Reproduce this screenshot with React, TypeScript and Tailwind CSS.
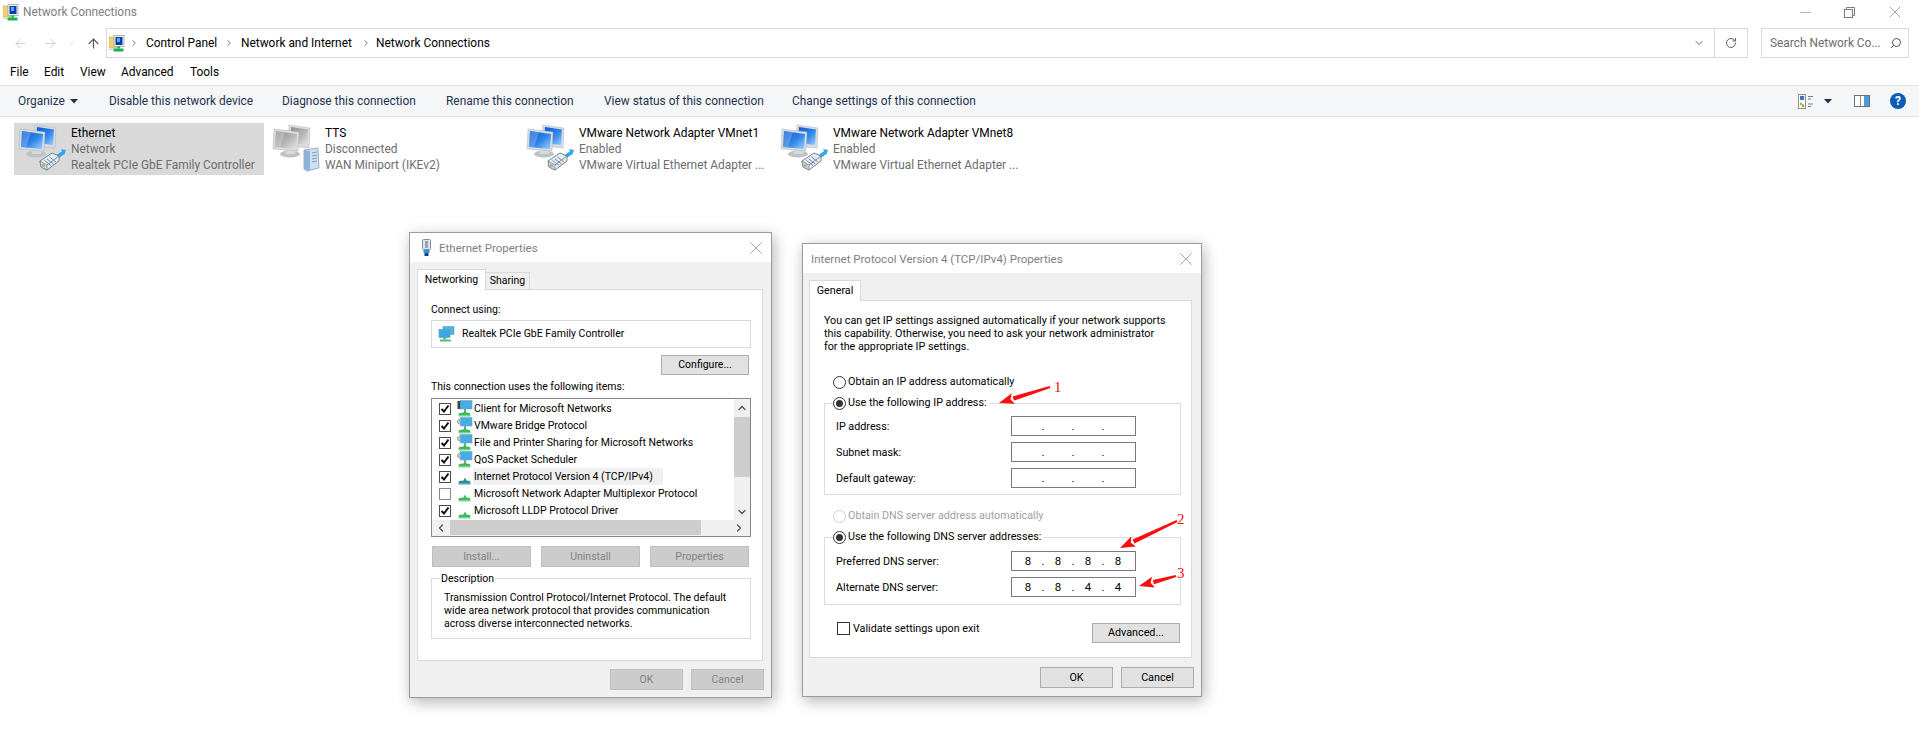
import React from "react";
import { ArrowLeft, ArrowRight, ArrowUp, ChevronDown, ChevronRight, ChevronUp, ChevronLeft, Minus, X, RotateCw, Search } from "lucide-react";

function NetIcon({ id, gray, kind }: { id: string; gray?: boolean; kind: "plug" | "server" }) {
  const a = gray ? "#8f8f8f" : "#0b55d0";
  const b = gray ? "#e6e6e6" : "#9fd0ff";
  const frame = gray ? "#dcdcdc" : "#d5dce4";
  return (
    <svg width="48" height="48" viewBox="0 0 48 48" className="shrink-0">
      <defs>
        <linearGradient id={id + "s"} x1="0" y1="0" x2="1" y2="1">
          <stop offset="0" stopColor={a} />
          <stop offset="0.55" stopColor={gray ? "#b5b5b5" : "#2f86ea"} />
          <stop offset="1" stopColor={b} />
        </linearGradient>
      </defs>
      <polygon points="17,1 38,4 37,24 16,22" fill={frame} stroke="#aeb4ba" strokeWidth="0.5" />
      <polygon points="19,3 36,5.5 35,21 18,19" fill={`url(#${id}s)`} />
      <ellipse cx="18" cy="30" rx="10" ry="3.6" fill="#bfc2c4" />
      <polygon points="13,25 24,26 23,30 14,30" fill="#d7d9db" />
      <polygon points="2,5 27,8 26,27 1,25" fill={frame} stroke="#aeb4ba" strokeWidth="0.5" />
      <polygon points="4,7 25,10 24,25 3,23" fill={`url(#${id}s)`} />
      <polygon points="4,7 13,8.2 8,23.4 3,23" fill="#ffffff" opacity="0.22" />
      {kind === "plug" ? (
        <g>
          <path d="M39 33 L46 28" stroke="#2ea7ef" strokeWidth="3.5" />
          <polygon points="43,25 48,26 46,31" fill="#2ea7ef" />
          <polygon points="22,37 34,29 41,32 41,37 29,46 23,43" fill="#e4ebf1" stroke="#66788a" strokeWidth="0.9" />
          <polygon points="22,37 29,41 29,46 23,43" fill="#c9d3dc" stroke="#66788a" strokeWidth="0.6" />
          <path d="M29 41 L41 32 M26.5 36.5 L33 41.5 M29 35 L35.5 40 M31.5 33 L38 38" stroke="#7a8ea1" strokeWidth="1" />
          <rect x="24" y="40.5" width="3" height="2" fill="#c9a23a" />
        </g>
      ) : (
        <g>
          <polygon points="32,26 46,24 47,44 35,47 32,45" fill="#cfe0f0" stroke="#6f93b8" strokeWidth="0.7" />
          <polygon points="32,26 38,27 38,47 32,45" fill="#8fb2d6" />
          <path d="M40 29 L45 28 M40 32 L45 31 M40 35 L45 34 M40 38 L45 37" stroke="#7c9cbd" strokeWidth="1" />
        </g>
      )}
    </svg>
  );
}

function FolderNet() {
  return (
    <svg width="16" height="17" viewBox="0 0 16 17" className="shrink-0">
      <path d="M0 2 H5 L6 3.5 H11 V13 H0 Z" fill="#f2cf6b" stroke="#c9a13f" strokeWidth="0.5" />
      <rect x="5" y="0.5" width="10" height="11" fill="#f1f3f5" stroke="#8d99a6" strokeWidth="0.7" />
      <rect x="6.5" y="2" width="7" height="8" fill="#0b3fa8" />
      <rect x="8" y="3" width="3" height="4" fill="#5fa6f0" />
      <rect x="8.5" y="11.5" width="2.5" height="2" fill="#1bb35a" />
      <rect x="4.5" y="13.5" width="10" height="3" fill="#18b058" />
      <rect x="0" y="14" width="4" height="1" fill="#cfcfcf" />
    </svg>
  );
}

function SmallMonitors() {
  return (
    <svg width="17" height="16" viewBox="0 0 17 16" className="shrink-0">
      <rect x="5" y="0.5" width="11" height="8" fill="#4fb3e6" stroke="#5a9dc0" strokeWidth="0.6" />
      <rect x="1" y="3.5" width="11" height="8" fill="#39a7e0" stroke="#5a9dc0" strokeWidth="0.6" />
      <rect x="5.5" y="11.5" width="2.5" height="2" fill="#3ab56a" />
      <rect x="2" y="13.5" width="11" height="2" fill="#4cc27c" />
    </svg>
  );
}

function ProtoIcon({ type, teal }: { type: "client" | "gear" | "base"; teal?: boolean }) {
  const g = teal ? "#2b8f9c" : "#3cba5c";
  return (
    <svg width="16" height="17" viewBox="0 0 16 17" className="shrink-0">
      {type !== "base" && (
        <>
          {type === "client" ? (
            <rect x="0.5" y="1" width="4.5" height="8" fill="#3d4347" />
          ) : (
            <circle cx="3" cy="4.5" r="2.6" fill="#c3c9cd" stroke="#7f8a92" strokeWidth="1" strokeDasharray="1.4 0.8" />
          )}
          <rect x="3.5" y="0.5" width="11.5" height="8.5" fill="#48ade6" stroke="#6aa8c9" strokeWidth="0.6" />
          <rect x="7" y="9" width="2" height="2.5" fill="#999999" />
        </>
      )}
      <polygon points="8,9.5 9.5,12.5 13,13 13.5,15.5 1.5,15.5 2,13 6.5,12.5" fill={g} />
      <rect x="1.5" y="15" width="12" height="1.5" fill={teal ? "#54a6b2" : "#7ed48f"} />
    </svg>
  );
}

function Check({ on, className }: { on?: boolean; className?: string }) {
  return (
    <span className={"w-[12px] h-[12px] border bg-white shrink-0 flex items-center justify-center " + (on ? "border-[#4d4d4d] " : "border-[#8a8a8a] ") + (className || "")}>
      {on && (
        <svg width="10" height="10" viewBox="0 0 10 10">
          <path d="M1.5 5 L4 7.5 L8.5 1.5" fill="none" stroke="#111111" strokeWidth="2" />
        </svg>
      )}
    </span>
  );
}

function Radio({ on, disabled }: { on?: boolean; disabled?: boolean }) {
  return (
    <span className={"w-[13px] h-[13px] rounded-full border bg-white shrink-0 flex items-center justify-center " + (disabled ? "border-[#cfcfcf]" : "border-[#333333]")}>
      {on && <span className="w-[7px] h-[7px] rounded-full bg-[#333333]" />}
    </span>
  );
}

function Btn({ label, w, disabled }: { label: string; w: string; disabled?: boolean }) {
  return (
    <div className={w + " flex items-center justify-center border shrink-0 " + (disabled ? "bg-[#cccccc] border-[#bfbfbf] text-[#838383]" : "bg-[#e1e1e1] border-[#adadad] text-black")}>{label}</div>
  );
}

function IpBox({ octets }: { octets?: string[] }) {
  const o = octets || ["", "", "", ""];
  return (
    <div className="w-[125px] h-[20px] border border-[#7a7a7a] bg-white flex items-center pl-[6px] text-black shrink-0 text-[11.5px]">
      <span className="w-[20px] text-center">{o[0]}</span>
      <span className="w-[10px] text-center">.</span>
      <span className="w-[20px] text-center">{o[1]}</span>
      <span className="w-[10px] text-center">.</span>
      <span className="w-[20px] text-center">{o[2]}</span>
      <span className="w-[10px] text-center">.</span>
      <span className="w-[20px] text-center">{o[3]}</span>
    </div>
  );
}

function IpRow({ label, octets }: { label: string; octets?: string[] }) {
  return (
    <div className="flex items-center h-[20px] pl-[11px]">
      <span className="w-[175px] shrink-0 pt-[1px]">{label}</span>
      <IpBox octets={octets} />
    </div>
  );
}

function Arrow({ x1, y1, x2, y2 }: { x1: number; y1: number; x2: number; y2: number }) {
  const len = Math.hypot(x2 - x1, y2 - y1);
  const ux = (x2 - x1) / len;
  const uy = (y2 - y1) / len;
  const bx = x2 - ux * 15;
  const by = y2 - uy * 15;
  const nx = -uy;
  const ny = ux;
  return (
    <>
      <polygon points={`${x1 - nx * 1.1},${y1 - ny * 1.1} ${x1 + nx * 1.1},${y1 + ny * 1.1} ${bx + nx * 2.2},${by + ny * 2.2} ${bx - nx * 2.2},${by - ny * 2.2}`} fill="#f80f0f" />
      <polygon points={`${x2},${y2} ${bx + nx * 5.5},${by + ny * 5.5} ${bx + ux * 3},${by + uy * 3} ${bx - nx * 5.5},${by - ny * 5.5}`} fill="#f80f0f" />
    </>
  );
}

function Conn({ name, status, dev, selected, gray, id }: { name: string; status: string; dev: string; selected?: boolean; gray?: boolean; id: string }) {
  return (
    <div className={"w-[250px] h-[52px] flex pl-[4px] pt-[1px] " + (selected ? "bg-[#d9d9d9]" : "")}>
      <NetIcon id={id} gray={gray} kind={gray ? "server" : "plug"} />
      <div className="ml-[5px] flex flex-col leading-[16px] whitespace-nowrap -mt-[1px] pt-[2px]">
        <span className="text-black">{name}</span>
        <span className="text-[#6d6d6d]">{status}</span>
        <span className="text-[#6d6d6d]">{dev}</span>
      </div>
    </div>
  );
}

const rows: { t: string; on: boolean; icon: "client" | "gear" | "base"; sel?: boolean }[] = [
  { t: "Client for Microsoft Networks", on: true, icon: "client" },
  { t: "VMware Bridge Protocol", on: true, icon: "gear" },
  { t: "File and Printer Sharing for Microsoft Networks", on: true, icon: "gear" },
  { t: "QoS Packet Scheduler", on: true, icon: "gear" },
  { t: "Internet Protocol Version 4 (TCP/IPv4)", on: true, icon: "base", sel: true },
  { t: "Microsoft Network Adapter Multiplexor Protocol", on: false, icon: "base" },
  { t: "Microsoft LLDP Protocol Driver", on: true, icon: "base" },
];

function EthernetDialog() {
  return (
    <div className="absolute left-[409px] top-[232px] w-[363px] h-[466px] border border-[#9b9b9b] bg-[#f0f0f0] flex flex-col text-[10.5px] shadow-[2px_4px_14px_rgba(0,0,0,0.3)]">
      <div className="h-[29px] bg-white flex items-center pl-[11px] pr-[4px] shrink-0 text-[11.5px]">
        <svg width="11" height="17" viewBox="0 0 11 17" className="shrink-0">
          <rect x="1.5" y="0.5" width="8" height="10" rx="1" fill="#dfe6ea" stroke="#7f8f9a" />
          <rect x="4" y="2" width="3" height="7" fill="#93a6b3" />
          <rect x="2.5" y="11" width="6" height="3" fill="#2c93d6" />
          <rect x="3.5" y="14" width="4" height="3" fill="#123e8c" />
        </svg>
        <span className="ml-[7px] text-[#808080]">Ethernet Properties</span>
        <X className="ml-auto text-[#7a7a7a]" size={22} strokeWidth={0.7} />
      </div>
      <div className="flex-1 flex flex-col pl-[7px] pr-[7px] pt-[7px]">
        <div className="flex items-end h-[21px] relative z-10 shrink-0">
          <div className="w-[69px] h-[21px] bg-white border border-b-0 border-[#d9d9d9] flex items-center justify-center">Networking</div>
          <div className="w-[44px] h-[18px] bg-[#f0f0f0] border border-l-0 border-[#d9d9d9] flex items-center justify-center">Sharing</div>
        </div>
        <div className="w-[346px] h-[372px] -mt-[1px] bg-white border border-[#d9d9d9] pl-[13px] flex flex-col shrink-0">
          <div className="h-[16px] mt-[12px] flex items-center">Connect using:</div>
          <div className="w-[320px] h-[28px] mt-[2px] border border-[#d9d9d9] flex items-center pl-[6px]">
            <SmallMonitors />
            <span className="ml-[7px]">Realtek PCIe GbE Family Controller</span>
          </div>
          <div className="mt-[7px] ml-[230px] h-[20px] flex"><Btn label="Configure..." w="w-[88px]" /></div>
          <div className="h-[16px] mt-[4px] flex items-center">This connection uses the following items:</div>
          <div className="w-[320px] h-[139px] mt-[3px] border border-[#828790] flex flex-col shrink-0 bg-[#f0f0f0]">
            <div className="flex h-[121px] shrink-0">
              <div className="w-[302px] bg-white pt-[1px] overflow-hidden">
                {rows.map((r) => (
                  <div key={r.t} className="h-[17px] flex items-center pl-[7px]">
                    <Check on={r.on} />
                    <span className="ml-[6px] flex"><ProtoIcon type={r.icon} teal={r.sel} /></span>
                    <span className={"h-[17px] flex items-center whitespace-nowrap px-[1px] pt-[1px] " + (r.sel ? "bg-[#f0f0f0] w-[190px]" : "")}>{r.t}</span>
                  </div>
                ))}
              </div>
              <div className="w-[16px] flex flex-col items-center text-[#505050]">
                <div className="h-[18px] flex items-center"><ChevronUp size={12} strokeWidth={2.5} /></div>
                <div className="w-full h-[60px] bg-[#cdcdcd]" />
                <div className="flex-1" />
                <div className="h-[16px] flex items-center"><ChevronDown size={12} strokeWidth={2.5} /></div>
              </div>
            </div>
            <div className="flex h-[15px] items-center text-[#505050]">
              <div className="w-[18px] flex justify-center"><ChevronLeft size={12} strokeWidth={2.5} /></div>
              <div className="w-[251px] h-full bg-[#cdcdcd]" />
              <div className="w-[32px]" />
              <div className="w-[17px] flex justify-start"><ChevronRight size={12} strokeWidth={2.5} /></div>
            </div>
          </div>
          <div className="flex h-[21px] mt-[9px] ml-[1px] gap-[10px]">
            <Btn label="Install..." w="w-[99px]" disabled />
            <Btn label="Uninstall" w="w-[99px]" disabled />
            <Btn label="Properties" w="w-[99px]" disabled />
          </div>
          <div className="relative w-[320px] h-[61px] mt-[11px] border border-[#dcdcdc] pl-[12px] pt-[12px] leading-[13px] whitespace-nowrap">
            <span className="absolute -top-[8px] left-[8px] bg-white px-[1px] leading-[16px]">Description</span>
            Transmission Control Protocol/Internet Protocol. The default<br />
            wide area network protocol that provides communication<br />
            across diverse interconnected networks.
          </div>
        </div>
        <div className="flex justify-end gap-[8px] h-[21px] mt-[8px] shrink-0">
          <Btn label="OK" w="w-[73px]" disabled />
          <Btn label="Cancel" w="w-[73px]" disabled />
        </div>
      </div>
    </div>
  );
}

function Ipv4Dialog() {
  return (
    <div className="absolute left-[802px] top-[243px] w-[400px] h-[454px] border border-[#9b9b9b] bg-[#f0f0f0] flex flex-col text-[10.75px] shadow-[2px_4px_14px_rgba(0,0,0,0.3)]">
      <div className="h-[29px] bg-white flex items-center pl-[8px] pr-[4px] shrink-0 text-[11.5px]">
        <span className="text-[#808080]">Internet Protocol Version 4 (TCP/IPv4) Properties</span>
        <X className="ml-auto text-[#7a7a7a]" size={22} strokeWidth={0.7} />
      </div>
      <div className="flex-1 flex flex-col pl-[6px] pr-[7px] pt-[7px]">
        <div className="flex items-end h-[21px] relative z-10 shrink-0">
          <div className="w-[52px] h-[21px] bg-white border border-b-0 border-[#d9d9d9] flex items-center justify-center">General</div>
        </div>
        <div className="w-[383px] h-[358px] -mt-[1px] bg-white border border-[#d9d9d9] flex flex-col shrink-0">
          <div className="mt-[13px] ml-[14px] leading-[13px] whitespace-nowrap">
            You can get IP settings assigned automatically if your network supports<br />
            this capability. Otherwise, you need to ask your network administrator<br />
            for the appropriate IP settings.
          </div>
          <div className="mt-[21px] ml-[23px] h-[16px] flex items-center gap-[2px]"><Radio /><span>Obtain an IP address automatically</span></div>
          <div className="relative ml-[14px] w-[357px] h-[92px] mt-[13px] border border-[#dcdcdc] pt-[12px] flex flex-col gap-[6px]">
            <div className="absolute -top-[9px] left-[8px] bg-white pr-[3px] h-[16px] flex items-center gap-[2px]"><Radio on /><span>Use the following IP address:</span></div>
            <IpRow label="IP address:" />
            <IpRow label="Subnet mask:" />
            <IpRow label="Default gateway:" />
          </div>
          <div className="mt-[13px] ml-[23px] h-[16px] flex items-center gap-[2px] text-[#a0a0a0]"><Radio disabled /><span>Obtain DNS server address automatically</span></div>
          <div className="relative ml-[14px] w-[357px] h-[68px] mt-[13px] border border-[#dcdcdc] pt-[13px] flex flex-col gap-[6px]">
            <div className="absolute -top-[9px] left-[8px] bg-white pr-[3px] h-[16px] flex items-center gap-[2px]"><Radio on /><span>Use the following DNS server addresses:</span></div>
            <IpRow label="Preferred DNS server:" octets={["8", "8", "8", "8"]} />
            <IpRow label="Alternate DNS server:" octets={["8", "8", "4", "4"]} />
          </div>
          <div className="mt-[17px] ml-[27px] mr-[11px] flex items-start">
            <span className="w-[13px] h-[13px] border border-[#333333] bg-white shrink-0" />
            <span className="ml-[3px] leading-[14px]">Validate settings upon exit</span>
            <div className="ml-auto h-[20px] mt-[1px] flex"><Btn label="Advanced..." w="w-[88px]" /></div>
          </div>
        </div>
        <div className="flex justify-end gap-[8px] h-[21px] mt-[9px] shrink-0">
          <Btn label="OK" w="w-[73px]" />
          <Btn label="Cancel" w="w-[73px]" />
        </div>
      </div>
    </div>
  );
}

export default function App() {
  return (
    <div className="relative w-[1919px] h-[752px] bg-white overflow-hidden text-[11.9px] leading-[16px] text-black [font-family:Roboto,sans-serif]">
      {/* title bar */}
      <div className="h-[28px] flex items-center pl-[3px] pb-[4px]">
        <FolderNet />
        <span className="ml-[4px] text-[#808080]">Network Connections</span>
        <div className="ml-auto flex items-center text-[#7a7a7a]">
          <div className="w-[45px] flex justify-center"><Minus size={17} strokeWidth={0.8} /></div>
          <div className="w-[45px] pr-[3px] flex justify-center">
            <svg width="11" height="11" viewBox="0 0 11 11" fill="none" stroke="#7a7a7a"><rect x="0.5" y="2.5" width="8" height="8" /><path d="M2.5 2.5 V0.5 H10.5 V8.5 H8.5" /></svg>
          </div>
          <div className="w-[45px] pr-[1px] flex justify-center"><X size={20} strokeWidth={0.8} /></div>
          <div className="w-[1px]" />
        </div>
      </div>
      {/* address row */}
      <div className="h-[30px] flex items-center">
        <div className="w-[106px] shrink-0 flex items-center pl-[13px]">
          <ArrowLeft size={15} strokeWidth={1.6} className="text-[#d0d0d0]" />
          <ArrowRight size={15} strokeWidth={1.6} className="ml-[15px] text-[#d0d0d0]" />
          <ChevronDown size={9} strokeWidth={1.5} className="ml-[9px] text-[#c8c8c8]" />
          <ArrowUp size={15} strokeWidth={2} className="ml-[10px] text-[#5a5a5a]" />
        </div>
        <div className="w-[1642px] h-[30px] shrink-0 border border-[#d9d9d9] flex items-center pl-[2px]">
          <FolderNet />
          <ChevronRight size={10} strokeWidth={2} className="ml-[4px] text-[#606060]" />
          <span className="ml-[7px] w-[78px] whitespace-nowrap">Control Panel</span>
          <ChevronRight size={10} strokeWidth={2} className="text-[#606060]" />
          <span className="ml-[7px] w-[120px] whitespace-nowrap">Network and Internet</span>
          <ChevronRight size={10} strokeWidth={2} className="text-[#606060]" />
          <span className="ml-[5px] whitespace-nowrap">Network Connections</span>
          <div className="ml-auto h-full flex items-center">
            <ChevronDown size={12} strokeWidth={2} className="text-[#606060]" />
            <div className="ml-[9px] w-[1px] h-full bg-[#d9d9d9]" />
            <div className="w-[32px] flex justify-center"><RotateCw size={12} strokeWidth={2} className="text-[#606060]" /></div>
          </div>
        </div>
        <div className="ml-[13px] w-[148px] h-[30px] border border-[#d9d9d9] flex items-center pl-[8px] text-[#6d6d6d]">
          <span className="whitespace-nowrap">Search Network Co...</span>
          <Search size={12} strokeWidth={2} className="ml-auto mr-[6px] -scale-x-100 text-[#505050]" />
        </div>
      </div>
      {/* menu */}
      <div className="h-[27px] flex items-center pl-[10px]">
        <span className="w-[34px]">File</span>
        <span className="w-[36px]">Edit</span>
        <span className="w-[41px]">View</span>
        <span className="w-[69px]">Advanced</span>
        <span>Tools</span>
      </div>
      {/* toolbar */}
      <div className="h-[32px] bg-[#f5f6f7] border-y border-[#e2e3e4] flex items-center pl-[18px] text-[#1e3250]">
        <span className="w-[91px] flex items-center">Organize
          <svg width="8" height="5" viewBox="0 0 8 5" className="ml-[5px]"><path d="M0 0 H8 L4 4.5 Z" fill="#1e3250" /></svg>
        </span>
        <span className="w-[173px] whitespace-nowrap">Disable this network device</span>
        <span className="w-[164px] whitespace-nowrap">Diagnose this connection</span>
        <span className="w-[158px] whitespace-nowrap">Rename this connection</span>
        <span className="w-[188px] whitespace-nowrap">View status of this connection</span>
        <span className="whitespace-nowrap">Change settings of this connection</span>
        <div className="ml-auto flex items-center pr-[13px]">
          <svg width="16" height="15" viewBox="0 0 16 15">
            <rect x="0.5" y="0.5" width="7" height="14" fill="#ffffff" stroke="#8f8f8f" />
            <rect x="2" y="2" width="4" height="4" fill="#3a79b8" />
            <rect x="2" y="8.5" width="2" height="2.5" fill="#d9a13a" />
            <rect x="4" y="10.5" width="2" height="2.5" fill="#6fa83a" />
            <path d="M10 2.5 H15 M10 5 H13 M10 10 H15 M10 12.5 H13" stroke="#7a7a7a" />
          </svg>
          <svg width="8" height="5" viewBox="0 0 8 5" className="ml-[10px]"><path d="M0 0 H8 L4 4.5 Z" fill="#1e3250" /></svg>
          <svg width="16" height="12" viewBox="0 0 16 12" className="ml-[22px]">
            <rect x="0.5" y="0.5" width="15" height="11" fill="#ffffff" stroke="#6f6f6f" />
            <rect x="6" y="1" width="1" height="10" fill="#8f8f8f" />
            <rect x="10" y="1" width="5" height="10" fill="#4a9be0" />
          </svg>
          <span className="ml-[20px] w-[16px] h-[16px] rounded-full bg-[#0b5cb5] text-white font-bold flex items-center justify-center">?</span>
        </div>
      </div>
      {/* connections */}
      <div className="mt-[6px] ml-[14px] flex gap-[4px]">
        <Conn id="a" name="Ethernet" status="Network" dev="Realtek PCIe GbE Family Controller" selected />
        <Conn id="b" name="TTS" status="Disconnected" dev="WAN Miniport (IKEv2)" gray />
        <Conn id="c" name="VMware Network Adapter VMnet1" status="Enabled" dev="VMware Virtual Ethernet Adapter ..." />
        <Conn id="d" name="VMware Network Adapter VMnet8" status="Enabled" dev="VMware Virtual Ethernet Adapter ..." />
      </div>
      <EthernetDialog />
      <Ipv4Dialog />
      {/* annotations */}
      <svg className="absolute left-0 top-0 pointer-events-none" width="1919" height="752">
        <Arrow x1={1050} y1={387} x2={999} y2={403} />
        <Arrow x1={1177} y1={521} x2={1120} y2={548} />
        <Arrow x1={1176} y1={576} x2={1139} y2={586} />
      </svg>
      <span className="absolute left-[1054px] top-[378px] text-[15px] leading-[18px] text-[#f80f0f] [font-family:'Liberation_Serif',serif]">1</span>
      <span className="absolute left-[1177px] top-[510px] text-[15px] leading-[18px] text-[#f80f0f] [font-family:'Liberation_Serif',serif]">2</span>
      <span className="absolute left-[1177px] top-[564px] text-[15px] leading-[18px] text-[#f80f0f] [font-family:'Liberation_Serif',serif]">3</span>
    </div>
  );
}
